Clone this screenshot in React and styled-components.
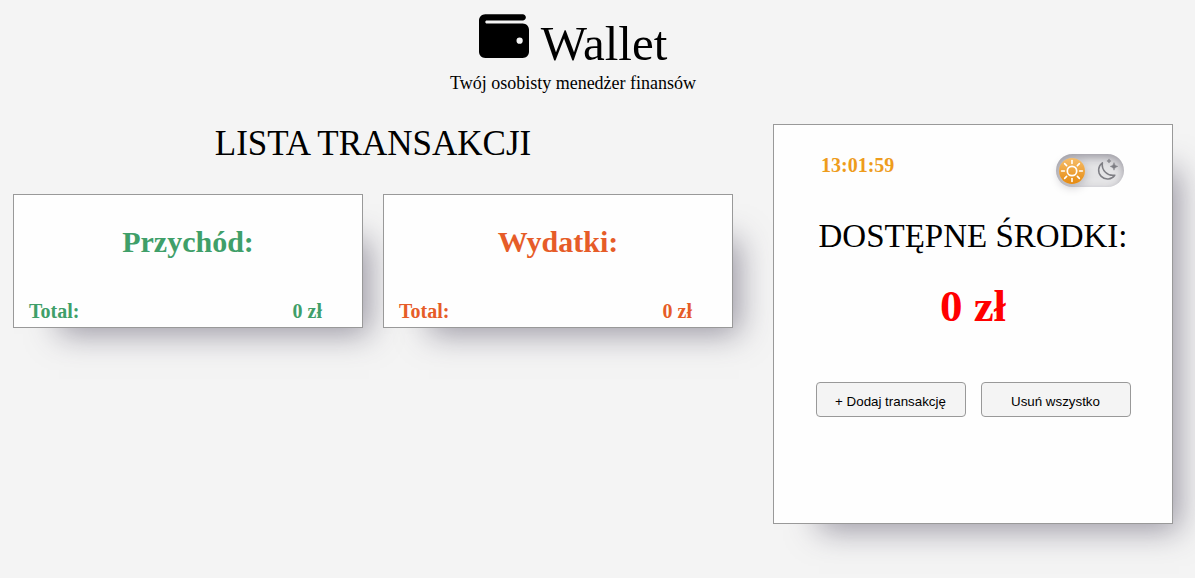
import React, { useState } from "react";
import styled, { createGlobalStyle, css } from "styled-components";

const GlobalStyle = createGlobalStyle`
  * {
    box-sizing: border-box;
    margin: 0;
    padding: 0;
  }

  body {
    background-color: #f4f4f4;
    color: #000;
    font-family: "Liberation Serif", "Times New Roman", serif;
  }
`;

const panel = css`
  background-color: #fefefe;
  border: 1px solid #999;
  box-shadow: 26px 26px 30px -20px rgba(66, 60, 84, 0.5);
`;

const Page = styled.div`
  padding: 14px 22px 50px 13px;
`;

const Header = styled.header`
  display: flex;
  flex-direction: column;
  align-items: center;
  padding-right: 40px;
`;

const Brand = styled.h1`
  display: flex;
  align-items: flex-start;
  gap: 12px;
  font-size: 49px;
  font-weight: 400;
  line-height: 60px;
`;

const WalletIcon = styled.svg`
  width: 50px;
  height: 44px;
`;

const Subtitle = styled.p`
  font-size: 18px;
  line-height: 18px;
`;

const Main = styled.main`
  display: grid;
  grid-template-columns: minmax(0, 1fr) 400px;
  gap: 40px;
  align-items: start;
  margin-top: 32px;
`;

const ListHeading = styled.h2`
  font-size: 35px;
  font-weight: 400;
  line-height: 40px;
  text-align: center;
  text-transform: uppercase;
`;

const Cards = styled.div`
  display: grid;
  grid-template-columns: 1fr 1fr;
  gap: 20px;
  margin-top: 30px;
`;

const Card = styled.section`
  ${panel}
  display: flex;
  flex-direction: column;
  padding: 30px 40px 4px 15px;
  color: ${({ $color }) => $color};
`;

const CardTitle = styled.h3`
  padding-left: 25px;
  font-size: 30px;
  line-height: 34px;
  text-align: center;
`;

const CardTotal = styled.p`
  display: flex;
  justify-content: space-between;
  margin-top: 40px;
  font-size: 20px;
  font-weight: 700;
  line-height: 24px;
`;

const Summary = styled.aside`
  ${panel}
  display: flex;
  flex-direction: column;
  align-items: center;
  min-height: 400px;
  padding: 29px 40px;
`;

const SummaryTop = styled.div`
  display: flex;
  justify-content: space-between;
  align-self: stretch;
  padding: 0 8px 0 7px;
`;

const Clock = styled.time`
  color: #ee9c1c;
  font-size: 20px;
  font-weight: 700;
  line-height: 22px;
`;

const Toggle = styled.label`
  display: flex;
  align-items: center;
  justify-content: space-between;
  width: 68px;
  height: 33px;
  padding: 0 4px 0 3px;
  border-radius: 17px;
  background-color: #e4e4e6;
  box-shadow: inset 0 3px 10px rgba(30, 25, 45, 0.4),
    inset 0 -3px 10px rgba(255, 255, 255, 0.4);
  cursor: pointer;
`;

const ToggleInput = styled.input`
  position: absolute;
  width: 1px;
  height: 1px;
  opacity: 0;
`;

const Knob = styled.span`
  display: flex;
  width: 26px;
  height: 26px;
  border-radius: 50%;
  background: linear-gradient(180deg, #f6bd6a, #e58a10);
  box-shadow: 0 3px 10px rgba(30, 25, 45, 0.25);
`;

const Glyph = styled.svg`
  width: 26px;
  height: 26px;
`;

const BalanceLabel = styled.h2`
  margin-top: 30px;
  font-size: 33px;
  font-weight: 400;
  line-height: 38px;
  text-transform: uppercase;
  white-space: nowrap;
`;

const Balance = styled.p`
  margin-top: 26px;
  color: #f00;
  font-size: 45px;
  font-weight: 700;
  line-height: 50px;
`;

const Actions = styled.div`
  display: flex;
  gap: 15px;
  margin-top: 51px;
`;

const ActionButton = styled.button`
  width: 150px;
  height: 35px;
  padding-top: 3px;
  border: 1px solid #999;
  border-radius: 4px;
  background-color: #f4f4f4;
  color: #000;
  font-family: "Liberation Sans", Arial, sans-serif;
  cursor: pointer;
`;

const cards = [
  { title: "Przychód:", color: "#3f9f69" },
  { title: "Wydatki:", color: "#e65c28" },
];

const rays = [0, 45, 90, 135, 180, 225, 270, 315];

export default function App() {
  const [dark, setDark] = useState(false);

  return (
    <>
      <GlobalStyle />
      <Page>
        <Header>
          <Brand>
            <WalletIcon viewBox="0 32 512 448" aria-hidden="true">
              <path d="M64 32C28.7 32 0 60.7 0 96V416c0 35.3 28.7 64 64 64H448c35.3 0 64-28.7 64-64V192c0-35.3-28.7-64-64-64H80c-8.8 0-16-7.2-16-16s7.2-16 16-16H448c17.7 0 32-14.3 32-32s-14.3-32-32-32H64zM416 272a32 32 0 1 1 0 64 32 32 0 1 1 0-64z" />
            </WalletIcon>
            Wallet
          </Brand>
          <Subtitle>Twój osobisty menedżer finansów</Subtitle>
        </Header>
        <Main>
          <div>
            <ListHeading>Lista transakcji</ListHeading>
            <Cards>
              {cards.map(({ title, color }) => (
                <Card key={title} $color={color}>
                  <CardTitle>{title}</CardTitle>
                  <CardTotal>
                    <span>Total:</span>
                    <span>0 zł</span>
                  </CardTotal>
                </Card>
              ))}
            </Cards>
          </div>
          <Summary>
            <SummaryTop>
              <Clock>13:01:59</Clock>
              <Toggle>
                <ToggleInput
                  type="checkbox"
                  aria-label="Tryb ciemny"
                  checked={dark}
                  onChange={(event) => setDark(event.target.checked)}
                />
                <Knob>
                  <Glyph viewBox="0 0 26 26" fill="none" stroke="#fff" aria-hidden="true">
                    <circle cx="13" cy="13" r="4.7" strokeWidth="1.7" />
                    {rays.map((angle) => (
                      <path
                        key={angle}
                        d="M13 2.6V5.4"
                        strokeWidth="1.6"
                        strokeLinecap="round"
                        transform={`rotate(${angle} 13 13)`}
                      />
                    ))}
                  </Glyph>
                </Knob>
                <Glyph viewBox="0 0 26 26" fill="none" stroke="#7e7e84" aria-hidden="true">
                  <path
                    d="M8.4 4.8A8.9 8.9 0 1 0 20.8 17.2A10.8 10.8 0 0 1 8.4 4.8Z"
                    strokeWidth="1.5"
                    strokeLinejoin="round"
                  />
                  <path
                    d="M20 4.6Q20.4 8 23.8 8.4Q20.4 8.8 20 12.2Q19.6 8.8 16.2 8.4Q19.6 8 20 4.6ZM15 0.9Q15.2 2.8 17.1 3Q15.2 3.2 15 5.1Q14.8 3.2 12.9 3Q14.8 2.8 15 0.9Z"
                    fill="#7e7e84"
                    strokeWidth="0.5"
                  />
                </Glyph>
              </Toggle>
            </SummaryTop>
            <BalanceLabel>Dostępne środki:</BalanceLabel>
            <Balance>0 zł</Balance>
            <Actions>
              <ActionButton type="button">+ Dodaj transakcję</ActionButton>
              <ActionButton type="button">Usuń wszystko</ActionButton>
            </Actions>
          </Summary>
        </Main>
      </Page>
    </>
  );
}
